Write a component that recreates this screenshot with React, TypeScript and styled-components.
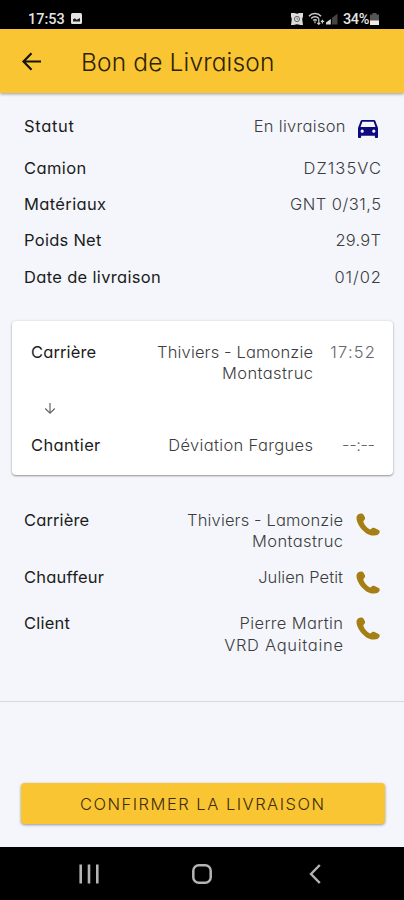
import React from "react";
import styled, { createGlobalStyle } from "styled-components";

const GlobalStyle = createGlobalStyle`
  *, *::before, *::after { box-sizing: border-box; }
  body {
    margin: 0;
    background: #f4f6fb;
    font-family: Inter, "Noto Sans", sans-serif;
    font-feature-settings: "cv11";
  }
`;

const Screen = styled.div`
  width: 404px;
  height: 900px;
  display: flex;
  flex-direction: column;
  overflow: hidden;
  background: #f4f6fb;
  font-size: 16.5px;
  line-height: 21.7px;
`;

const StatusBar = styled.div`
  height: 29px;
  flex: none;
  display: flex;
  align-items: center;
  justify-content: space-between;
  padding: 9px 25px 0 28px;
  background: #000;
  color: #e4e4e4;
  font: 500 14.5px/20px Roboto, sans-serif;
`;

const StatusGroup = styled.div<{ $gap: number }>`
  display: flex;
  align-items: center;
  gap: ${(p) => p.$gap}px;

  svg {
    flex: none;
    margin-top: -1px;
  }
`;

const StatusText = styled.span<{ $track?: number }>`
  padding-top: 2px;
  letter-spacing: ${(p) => p.$track ?? 0}px;
`;

const Header = styled.header`
  height: 64px;
  flex: none;
  display: flex;
  align-items: center;
  gap: 39px;
  padding: 0 22px 0 21px;
  background: #fac532;
  box-shadow: 0 1px 3px rgba(0, 0, 0, 0.38);
  z-index: 1;
`;

const BackButton = styled.button`
  display: flex;
  padding: 0;
  border: 0;
  background: none;
  color: #17140a;
`;

const Title = styled.h1`
  margin: 2px 0 0;
  font-size: 24.5px;
  line-height: 32px;
  font-weight: 300;
  letter-spacing: 0.14px;
  color: #2c2308;
`;

const Label = styled.dt<{ $track?: number }>`
  flex: none;
  font-weight: 400;
  color: #1b1c20;
  letter-spacing: ${(p) => p.$track ?? 0}px;
`;

const Value = styled.dd<{ $track?: number }>`
  margin: 0 ${(p) => -(p.$track ?? 0)}px 0 0;
  text-align: right;
  font-weight: 300;
  color: #3c3d41;
  letter-spacing: ${(p) => p.$track ?? 0}px;
`;

const Details = styled.dl`
  margin: 0;
  padding: 11.3px 23px 0 24px;
`;

const DetailRow = styled.div<{ $height?: number }>`
  height: ${(p) => p.$height ?? 36.4}px;
  display: flex;
  align-items: center;
  justify-content: space-between;
`;

const StatusValue = styled.div`
  display: flex;
  align-items: center;
  gap: 12.5px;
  padding-right: 3px;

  svg {
    margin-top: 3px;
  }
`;

const Route = styled.dl`
  height: 154px;
  flex: none;
  margin: 24.7px 11px 0 12px;
  padding: 21px 18px 0 19px;
  border-radius: 4px;
  background: #fff;
  box-shadow: 0 1px 2px rgba(0, 0, 0, 0.38), 0 0 3px rgba(0, 0, 0, 0.1);
`;

const RouteRow = styled.div`
  display: grid;
  grid-template-columns: 80px 1fr 62px;
  align-items: start;
`;

const Time = styled.dd<{ $track: number }>`
  margin: 0 ${(p) => -p.$track}px 0 0;
  text-align: right;
  font-weight: 300;
  letter-spacing: ${(p) => p.$track}px;
  color: #66676b;
`;

const RouteArrow = styled.div`
  height: 50px;
  display: flex;
  align-items: center;
  padding: 0 0 2px 13px;
  color: #66676b;
`;

const Contacts = styled.dl`
  flex: none;
  margin: 35px 24px 0;
`;

const ContactRow = styled.div<{ $space?: number }>`
  display: grid;
  grid-template-columns: 100px 1fr 37px;
  align-items: start;
  margin-bottom: ${(p) => p.$space ?? 0}px;
`;

const CallButton = styled.button`
  display: flex;
  justify-content: flex-end;
  height: 21.7px;
  padding: 3.5px 0 0;
  border: 0;
  background: none;
  color: #a57f14;
  overflow: visible;

  svg {
    flex: none;
  }
`;

const Divider = styled.hr`
  width: 100%;
  height: 1px;
  flex: none;
  margin: 44px 0 0;
  border: 0;
  background: #d6d8de;
`;

const ConfirmButton = styled.button`
  flex: none;
  height: 41px;
  margin: 81.5px 19.5px 0 21px;
  padding: 0;
  border: 0;
  border-radius: 4px;
  background: #fac532;
  box-shadow: 0 1px 3px rgba(0, 0, 0, 0.4);
  color: #3b2e0b;
  font: 300 16.5px/22px Inter, sans-serif;
  letter-spacing: 1.5px;
`;

const NavBar = styled.nav`
  height: 53px;
  flex: none;
  margin-top: auto;
  display: grid;
  grid-template-columns: 113px 113px 113px;
  justify-content: center;
  place-items: center;
  background: #000;
  color: #b4b4b4;
`;

const PictureIcon = () => (
  <svg width="11" height="11" viewBox="0 0 11 11">
    <rect width="11" height="11" rx="1.5" fill="#e4e4e4" />
    <path d="M2 8.6V6.2l1.8-1 1.8 1.5L9 5v3.6z" fill="#222" />
  </svg>
);

const AlarmIcon = () => (
  <svg width="12" height="12" viewBox="0 0 12 12">
    <path d="M0 0h3.5L6 .8 8.5 0H12v3.5L11.2 6l.8 6H9.5L6 11.3 2.5 12H0l.8-6L0 3.5z" fill="#dcdcdc" />
    <circle cx="6" cy="6" r="2.6" fill="none" stroke="#555" strokeWidth=".9" />
    <path d="M6 4.6V6.2h1.2" fill="none" stroke="#555" strokeWidth=".7" />
  </svg>
);

const WifiIcon = () => (
  <svg width="17" height="13" viewBox="0 0 17 13" fill="none" stroke="#cfcfcf">
    <path d="M1 4.2C4 .7 10 .7 13 4.2M3.2 6.4c2-2.2 5.6-2.2 7.6 0M5.2 8.5c1-1.1 2.6-1.1 3.6 0" strokeWidth="1.5" />
    <path d="M7 9.3v2M10.8 6.5v5.8M9.3 10.8l1.5 1.5 1.5-1.5M14.4 11.5V7.7M12.8 9.3h3.4" strokeWidth="1.2" />
  </svg>
);

const SignalIcon = () => (
  <svg width="12" height="12" viewBox="0 0 12 12">
    <path d="M0 11.5V9.5l4.8-3.6v5.6z" fill="#d8d8d8" />
    <path d="M6 11.5V4.8L11.5.8v10.7z" fill="#444" />
  </svg>
);

const BatteryIcon = () => (
  <svg width="9" height="12" viewBox="0 0 9 12">
    <path d="M2.5 0h4v1.5H9V8H0V1.5h2.5z" fill="#555" />
    <path d="M0 7.5h9V12H0z" fill="#ececec" />
  </svg>
);

const BackArrowIcon = () => (
  <svg width="21" height="20" viewBox="0 0 21 20" fill="none" stroke="currentColor" strokeWidth="2.2">
    <path d="M20 10.5H3M10.5 2.3L2.5 10.5l8 8.2" />
  </svg>
);

const DownArrowIcon = () => (
  <svg width="12" height="13" viewBox="0 0 12 13" fill="none" stroke="currentColor" strokeWidth="1.2">
    <path d="M6 1v10M1.2 6.5L6 11.2l4.8-4.7" />
  </svg>
);

const CarIcon = () => (
  <svg width="20" height="18" viewBox="0 0 20 18">
    <path
      fill="#0c0a7c"
      fillRule="evenodd"
      d="M4.5 0H15.5C16.5 0 17.2.5 17.5 1.3L20 8V17C20 17.6 19.6 18 19 18H17.9C17.3 18 16.9 17.6 16.9 17V15.8H3.1V17C3.1 17.6 2.7 18 2.1 18H1C.4 18 0 17.6 0 17V8L2.5 1.3C2.8.5 3.5 0 4.5 0ZM4.4 1.7 2.5 7H17.5L15.6 1.7ZM4.2 9.6A1.6 1.6 0 1 0 4.2 12.8A1.6 1.6 0 1 0 4.2 9.6ZM15.8 9.6A1.6 1.6 0 1 0 15.8 12.8A1.6 1.6 0 1 0 15.8 9.6Z"
    />
  </svg>
);

const PhoneIcon = () => (
  <svg width="24" height="23" viewBox="0 0 24 23">
    <path
      fill="currentColor"
      d="M2.8 1C4.5 0 6.6.2 7.6 1.7L8.9 4.3C9.4 5.7 8.8 7 7.6 7.8C7.2 8.3 7.3 9 7.7 9.7C9 12.4 11 14.7 13.6 16.3C14.2 16.6 14.7 16.5 15.1 16.1C16 14.9 17.3 14.5 18.6 15.1L22.6 17.1C23.8 17.8 24 18.9 23.4 20C22.5 21.7 20.7 22.5 18.4 22.5H15.5C12.5 22 9.2 19.9 6.5 17C3.2 13.5.5 8.8.5 5C.5 3.2 1.3 1.9 2.8 1Z"
    />
  </svg>
);

const RecentsIcon = () => (
  <svg width="20" height="20" viewBox="0 0 20 20" stroke="currentColor" strokeWidth="2.6">
    <path d="M1.7.5v19M10 .5v19M18.3.5v19" />
  </svg>
);

const HomeIcon = () => (
  <svg width="20" height="20" viewBox="0 0 20 20" fill="none" stroke="currentColor" strokeWidth="2.5">
    <rect x="1.3" y="1.3" width="17.4" height="17.4" rx="5.5" />
  </svg>
);

const NavBackIcon = () => (
  <svg width="12" height="20" viewBox="0 0 12 20" fill="none" stroke="currentColor" strokeWidth="2.4">
    <path d="M10.8 1L2 10l8.8 9" />
  </svg>
);

const details = [
  { label: "Camion", track: 0.4, value: "DZ135VC", valueTrack: 1.09 },
  { label: "Matériaux", track: 0.36, value: "GNT 0/31,5", valueTrack: 0.5 },
  { label: "Poids Net", track: 0.27, value: "29.9T", valueTrack: 0.22 },
  { label: "Date de livraison", track: 0.33, value: "01/02", valueTrack: 0.95 },
];

const contacts: { label: string; track: number; space: number; lines: [string, number][] }[] = [
  { label: "Carrière", track: 0.12, space: 14.5, lines: [["Thiviers - Lamonzie", 0.14], ["Montastruc", 0.4]] },
  { label: "Chauffeur", track: 0.2, space: 24.3, lines: [["Julien Petit", 0.05]] },
  { label: "Client", track: 0.2, space: 0, lines: [["Pierre Martin", 0.35], ["VRD Aquitaine", 0.7]] },
];

export default function App() {
  return (
    <>
      <GlobalStyle />
      <Screen>
        <StatusBar>
          <StatusGroup $gap={6}>
            <StatusText>17:53</StatusText>
            <PictureIcon />
          </StatusGroup>
          <StatusGroup $gap={5}>
            <AlarmIcon />
            <StatusGroup $gap={1}>
              <WifiIcon />
              <SignalIcon />
            </StatusGroup>
            <StatusGroup $gap={1}>
              <StatusText $track={-0.4}>34%</StatusText>
              <BatteryIcon />
            </StatusGroup>
          </StatusGroup>
        </StatusBar>
        <Header>
          <BackButton aria-label="Retour">
            <BackArrowIcon />
          </BackButton>
          <Title>Bon de Livraison</Title>
        </Header>
        <Details>
          <DetailRow $height={46}>
            <Label $track={0.7}>Statut</Label>
            <StatusValue>
              <Value $track={0.3}>En livraison</Value>
              <CarIcon />
            </StatusValue>
          </DetailRow>
          {details.map((d) => (
            <DetailRow key={d.label}>
              <Label $track={d.track}>{d.label}</Label>
              <Value $track={d.valueTrack}>{d.value}</Value>
            </DetailRow>
          ))}
        </Details>
        <Route>
          <RouteRow>
            <Label $track={0.12}>Carrière</Label>
            <div>
              <Value $track={0.14}>Thiviers - Lamonzie</Value>
              <Value $track={0.4}>Montastruc</Value>
            </div>
            <Time $track={1.25}>17:52</Time>
          </RouteRow>
          <RouteArrow>
            <DownArrowIcon />
          </RouteArrow>
          <RouteRow>
            <Label $track={0.35}>Chantier</Label>
            <Value $track={0.34}>Déviation Fargues</Value>
            <Time $track={-0.4}>--:--</Time>
          </RouteRow>
        </Route>
        <Contacts>
          {contacts.map((c) => (
            <ContactRow key={c.label} $space={c.space}>
              <Label $track={c.track}>{c.label}</Label>
              <div>
                {c.lines.map(([text, track]) => (
                  <Value key={text} $track={track}>{text}</Value>
                ))}
              </div>
              <CallButton aria-label={`Appeler ${c.label}`}>
                <PhoneIcon />
              </CallButton>
            </ContactRow>
          ))}
        </Contacts>
        <Divider />
        <ConfirmButton>CONFIRMER LA LIVRAISON</ConfirmButton>
        <NavBar>
          <RecentsIcon />
          <HomeIcon />
          <NavBackIcon />
        </NavBar>
      </Screen>
    </>
  );
}
